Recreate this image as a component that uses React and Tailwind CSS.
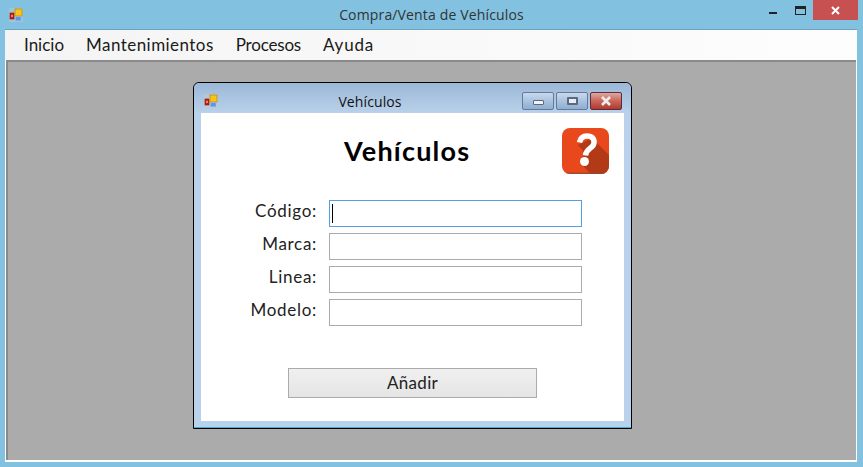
const gothic = "font-['Lato',sans-serif]";

function AppIcon({ className }) {
  return (
    <svg className={className} width="14" height="14" viewBox="0 0 14 14">
      <rect x="0" y="0" width="14" height="14" fill="#c9c9c9" opacity="0.45" />
      <rect x="1" y="5" width="4" height="6" fill="#c81c10" stroke="#8a1208" strokeWidth="0.6" />
      <rect x="2.3" y="6.8" width="1.4" height="2.2" fill="#f2b0a0" />
      <rect x="6" y="1" width="7" height="7" fill="#f5c518" stroke="#c48a10" strokeWidth="0.8" />
      <rect x="6.5" y="8.8" width="5.5" height="4" fill="#5b97e8" stroke="#9dbdea" strokeWidth="0.5" />
    </svg>
  );
}

function HelpIcon() {
  return (
    <svg width="47" height="47" viewBox="0 0 47 47">
      <defs>
        <clipPath id="helpClip">
          <rect x="0" y="0" width="47" height="46" rx="8" />
        </clipPath>
      </defs>
      <g clipPath="url(#helpClip)">
        <rect width="47" height="47" fill="#e8481c" />
        <path d="M16 17 L30 10 L47 27 L47 47 L30 47 L18 35 L22 24 Z" fill="#b23a16" />
        <rect y="44.5" width="47" height="2.5" fill="#8d4a32" opacity="0.7" />
      </g>
      <path
        d="M17.5 14.5 C18.5 9.5 22 8 25 8 C30 8 32.5 11 32 15 C31.5 20.5 24 20 23.5 27.5"
        fill="none"
        stroke="#fff"
        strokeWidth="5.5"
      />
      <circle cx="22.5" cy="33.5" r="4.5" fill="#fff" />
    </svg>
  );
}

function ChildButton({ children, close }) {
  return (
    <div
      className={`flex items-center justify-center w-[32px] h-[18px] rounded-[2px] border ${
        close
          ? "border-[#5e2a3c] bg-gradient-to-b from-[#dca99f] via-[#c8655a] to-[#b0392d]"
          : "border-[#64799b] bg-gradient-to-b from-[#c9d9ec] via-[#a9c3e0] to-[#90aecf]"
      }`}
    >
      {children}
    </div>
  );
}

function Field({ label, active }) {
  return (
    <div className="flex items-center mb-[6px]">
      <label className="w-[116px] text-right text-[17px] tracking-[0.7px] text-[#222] -mt-[6px]">{label}</label>
      <div className="relative ml-[12px]">
        <input
          readOnly
          className={`block w-[253px] h-[27px] bg-white border outline-none ${active ? "border-[#569de5]" : "border-[#ababab]"}`}
        />
        {active && <div className="absolute left-[3px] top-[4px] w-[1px] h-[19px] bg-black" />}
      </div>
    </div>
  );
}

function ChildWindow() {
  return (
    <div className="absolute left-[185px] top-[20px] w-[439px] h-[347px] border border-black rounded-t-[6px] bg-[#b9d1ea] flex flex-col">
      <div className="h-[30px] shrink-0 flex items-center pt-[6px] pl-[10px] pr-[9px] rounded-t-[6px] bg-gradient-to-b from-[#9cb8d8] to-[#b9d1ea]">
        <AppIcon />
        <div className="flex-1 text-center text-[14px] text-[#111] font-['Open_Sans',sans-serif] pr-[4px] pl-[4px] tracking-[0.1px]">Vehículos</div>
        <div className="flex gap-[2px]">
          <ChildButton>
            <div className="w-[11px] h-[5px] mt-[3px] bg-[#f2f2f2] border border-[#5c6880] rounded-[1px]" />
          </ChildButton>
          <ChildButton>
            <div className="w-[11px] h-[8px] border-2 border-[#5c6880] bg-[#e8eef6] rounded-[1px]" />
          </ChildButton>
          <ChildButton close>
            <svg width="12" height="10" viewBox="0 0 12 10">
              <path d="M2 1 L10 9 M10 1 L2 9" stroke="#eee" strokeWidth="2.6" />
            </svg>
          </ChildButton>
        </div>
      </div>
      <div className={`mx-[7px] h-[308px] shrink-0 bg-white ${gothic}`}>
        <div className="flex items-center pt-[15px]">
          <h1 className="ml-[143px] w-[125px] -mt-[2px] text-[27px] leading-[46px] font-bold text-black whitespace-nowrap tracking-[1.2px]">Vehículos</h1>
          <div className="ml-[93px]">
            <HelpIcon />
          </div>
        </div>
        <div className="mt-[25px]">
          <Field label="Código:" active />
          <Field label="Marca:" />
          <Field label="Linea:" />
          <Field label="Modelo:" />
        </div>
        <button className="block ml-[87px] mt-[42px] w-[249px] h-[30px] border border-[#ababab] bg-gradient-to-b from-[#f0f0f0] to-[#e5e5e5] text-[17px] tracking-[0.3px] text-[#222]">
          Añadir
        </button>
      </div>
      <div className="flex-1 border-b border-[#3fb0d0]" />
    </div>
  );
}

export default function App() {
  return (
    <div className="w-[863px] h-[467px] bg-[#82c2e0] flex flex-col overflow-hidden font-['Open_Sans',sans-serif]">
      <div className="h-[29px] shrink-0 relative flex items-center justify-center">
        <AppIcon className="absolute left-[9px] top-[8px]" />
        <span className="text-[14px] text-[#333] tracking-[0.15px]">Compra/Venta de Vehículos</span>
        <div className="absolute right-[5px] top-0 flex items-start">
          <div className="w-[8px] h-[2px] mt-[12px] mr-[18px] bg-[#222]" />
          <div className="w-[11px] h-[9px] mt-[6px] mr-[7px] border border-[#222] border-t-[3px]" />
          <div className="w-[45px] h-[20px] bg-[#c75050] flex items-center justify-center">
            <svg width="9" height="9" viewBox="0 0 9 9">
              <path d="M1 1 L8 8 M8 1 L1 8" stroke="#fff" strokeWidth="2" />
            </svg>
          </div>
        </div>
      </div>
      <div className="mx-[5px] w-[852px] h-[433px] shrink-0 flex flex-col border-t border-[#6ea3bd] bg-white">
        <nav className={`h-[30px] shrink-0 bg-gradient-to-r from-[#f4f4f4] to-[#fdfdfd] flex items-center pl-[19px] gap-[22px] text-[17px] text-[#1a1a1a] ${gothic}`}>
          <span>Inicio</span>
          <span className="tracking-[0.45px]">Mantenimientos</span>
          <span className="tracking-[-0.2px]">Procesos</span>
          <span className="tracking-[0.8px]">Ayuda</span>
        </nav>
        <main className="relative h-[400px] shrink-0 mx-[1px] bg-[#ababab] border-t-2 border-l-2 border-[#8a8a8a]">
          <ChildWindow />
        </main>
      </div>
    </div>
  );
}
